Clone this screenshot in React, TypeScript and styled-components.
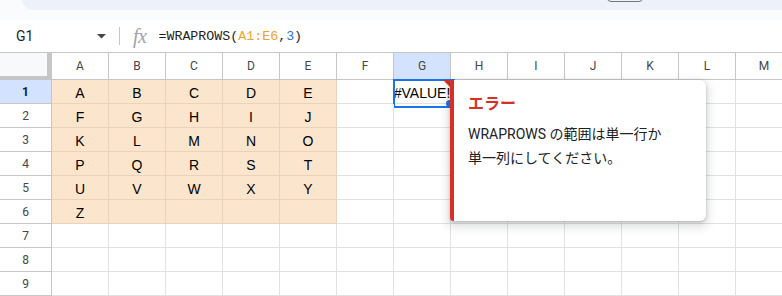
import React from 'react';
import styled, { createGlobalStyle, css } from 'styled-components';

const GlobalStyle = createGlobalStyle`
  html, body { margin: 0; padding: 0; background: #fff; overflow: hidden; }
  body { font-family: Roboto, "Noto Sans CJK JP", Arial, sans-serif; }
  * { box-sizing: border-box; }
`;

const Page = styled.div`
  position: relative;
  width: 782px;
  height: 296px;
  overflow: hidden;
  background: #fff;
`;

const TopArea = styled.div`
  height: 20px;
  background: #f9fbfd;
  padding-left: 22px;
`;

const Toolbar = styled.div`
  height: 10px;
  background: #edf2fa;
  border-bottom-left-radius: 10px;
  display: flex;
  align-items: flex-end;
`;

const ToolbarButton = styled.div`
  margin-left: 585px;
  margin-bottom: 8px;
  width: 36px;
  height: 10px;
  flex-shrink: 0;
  border: 1px solid #747775;
  border-radius: 4px;
`;

const FormulaBar = styled.div`
  height: 32px;
  display: flex;
  align-items: center;
  background: #fff;
`;

const NameBox = styled.div`
  width: 119px;
  display: flex;
  align-items: center;
  justify-content: space-between;
  padding: 0 13px 0 16px;
  font-size: 14px;
  color: #1f1f1f;
`;

const Separator = styled.div`
  width: 1px;
  height: 18px;
  background: #c4c7c5;
`;

const FxIcon = styled.span`
  margin-left: 13px;
  font-family: "Liberation Serif", "DejaVu Serif", serif;
  font-style: italic;
  font-size: 20px;
  line-height: 20px;
  color: #a0a3a6;
  letter-spacing: -0.5px;
`;

const FormulaText = styled.div`
  margin-left: 12px;
  font-family: "Liberation Mono", "DejaVu Sans Mono", monospace;
  font-size: 13.3px;
  color: #1f1f1f;
  white-space: pre;
`;

const Ref = styled.span`
  color: #efa232;
`;

const Num = styled.span`
  color: #2f6fd6;
`;

const Grid = styled.div`
  display: flex;
  flex-direction: column;
`;

const HeaderRow = styled.div`
  display: flex;
  height: 28px;
  border-top: 1px solid #c4c7c5;
`;

const Corner = styled.div`
  width: 52px;
  flex-shrink: 0;
  background: #f8f9fa;
  border-right: 5px solid #c4c7c5;
  border-bottom: 4px solid #c4c7c5;
`;

const ColHeader = styled.div<{ $selected?: boolean }>`
  width: 57px;
  flex-shrink: 0;
  display: flex;
  align-items: center;
  justify-content: center;
  font-size: 12px;
  color: #444746;
  border-right: 1px solid #c4c7c5;
  border-bottom: 1px solid #c4c7c5;
  background: ${(p) => (p.$selected ? '#d3e3fd' : '#fff')};
`;

const Row = styled.div`
  display: flex;
  height: 24px;
`;

const RowHeader = styled.div<{ $selected?: boolean }>`
  width: 52px;
  flex-shrink: 0;
  display: flex;
  align-items: center;
  justify-content: center;
  font-size: 12px;
  color: #444746;
  border-right: 1px solid #c4c7c5;
  border-bottom: 1px solid #c4c7c5;
  ${(p) =>
    p.$selected &&
    css`
      background: #d3e3fd;
      color: #041e49;
      font-weight: 700;
    `}
`;

const Cell = styled.div<{ $filled?: boolean; $selected?: boolean }>`
  position: relative;
  width: 57px;
  flex-shrink: 0;
  display: flex;
  justify-content: center;
  padding-top: 3px;
  line-height: 20px;
  font-family: "Liberation Sans", Arial, sans-serif;
  font-size: 14px;
  color: #000;
  white-space: nowrap;
  border-right: 1px solid ${(p) => (p.$filled ? '#ebd3bb' : '#e1e1e1')};
  border-bottom: 1px solid ${(p) => (p.$filled ? '#ebd3bb' : '#e1e1e1')};
  background: ${(p) => (p.$filled ? '#fce5cd' : 'transparent')};
  ${(p) =>
    p.$selected &&
    css`
      &::after {
        content: '';
        position: absolute;
        left: -1px;
        top: -1px;
        width: 58px;
        height: 25px;
        border: 2px solid #1a73e8;
        pointer-events: none;
      }
      &::before {
        content: '';
        position: absolute;
        left: 52px;
        top: 20px;
        width: 7px;
        height: 7px;
        border-radius: 50%;
        background: #1a73e8;
        z-index: 2;
      }
    `}
`;

const ErrorMark = styled.span`
  position: absolute;
  right: 0;
  top: 0;
  width: 0;
  height: 0;
  border-top: 7px solid #d93025;
  border-left: 7px solid transparent;
  z-index: 1;
`;

const Popup = styled.div`
  position: absolute;
  left: 450px;
  top: 80px;
  width: 256px;
  height: 141px;
  background: #fff;
  border-left: 4px solid #d93025;
  border-radius: 2px 6px 6px 4px;
  box-shadow: 0 1px 3px rgba(60, 64, 67, 0.3), 0 4px 8px 3px rgba(60, 64, 67, 0.15);
  padding: 12px 14px;
  z-index: 5;
`;

const PopupTitle = styled.div`
  font-size: 16px;
  font-weight: 700;
  line-height: 24px;
  color: #d93025;
  margin-bottom: 6px;
`;

const PopupBody = styled.div`
  font-size: 14px;
  line-height: 24px;
  color: #202124;
`;

const COLS = ['A', 'B', 'C', 'D', 'E', 'F', 'G', 'H', 'I', 'J', 'K', 'L', 'M'];
const DATA = [
  ['A', 'B', 'C', 'D', 'E'],
  ['F', 'G', 'H', 'I', 'J'],
  ['K', 'L', 'M', 'N', 'O'],
  ['P', 'Q', 'R', 'S', 'T'],
  ['U', 'V', 'W', 'X', 'Y'],
  ['Z', '', '', '', ''],
];

export default function App() {
  const rows = Array.from({ length: 9 }, (_, i) => i);
  return (
    <Page>
      <GlobalStyle />
      <TopArea>
        <Toolbar>
          <ToolbarButton />
        </Toolbar>
      </TopArea>
      <FormulaBar>
        <NameBox>
          <span>G1</span>
          <svg width="9" height="5" viewBox="0 0 9 5">
            <path d="M0 0h9L4.5 4.5z" fill="#444746" />
          </svg>
        </NameBox>
        <Separator />
        <FxIcon>fx</FxIcon>
        <FormulaText>
          =WRAPROWS(<Ref>A1:E6</Ref>,<Num>3</Num>)
        </FormulaText>
      </FormulaBar>
      <Grid>
        <HeaderRow>
          <Corner />
          {COLS.map((c) => (
            <ColHeader key={c} $selected={c === 'G'}>
              {c}
            </ColHeader>
          ))}
        </HeaderRow>
        {rows.map((r) => (
          <Row key={r}>
            <RowHeader $selected={r === 0}>{r + 1}</RowHeader>
            {COLS.map((c, ci) => {
              const filled = r < 6 && ci < 5;
              const selected = r === 0 && c === 'G';
              return (
                <Cell key={c} $filled={filled} $selected={selected}>
                  {filled ? DATA[r][ci] : selected ? '#VALUE!' : ''}
                  {selected && <ErrorMark />}
                </Cell>
              );
            })}
          </Row>
        ))}
      </Grid>
      <Popup>
        <PopupTitle>エラー</PopupTitle>
        <PopupBody>
          WRAPROWS の範囲は単一行か
          <br />
          単一列にしてください。
        </PopupBody>
      </Popup>
    </Page>
  );
}
